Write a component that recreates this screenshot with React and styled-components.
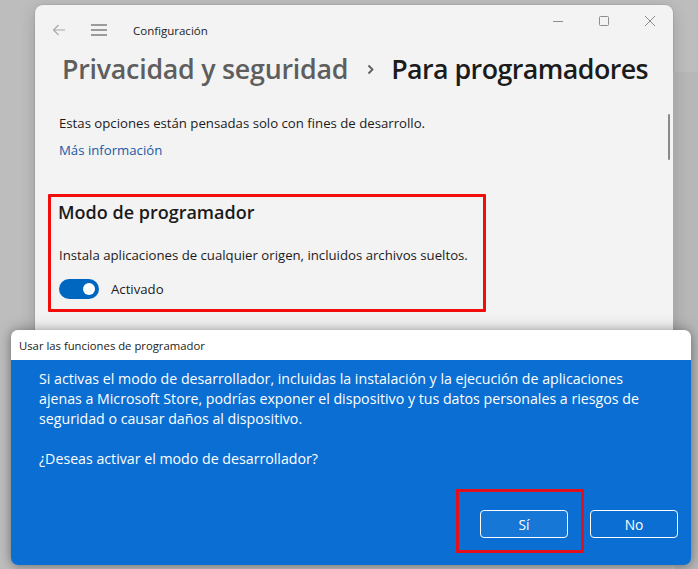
import React from "react";
import styled, { createGlobalStyle } from "styled-components";

const GlobalStyle = createGlobalStyle`
  html, body {
    margin: 0;
    padding: 0;
    background: #bcbcbc;
    font-family: "Open Sans", "Noto Sans", sans-serif;
  }
`;

const Desktop = styled.div`
  position: relative;
  width: 698px;
  height: 569px;
  overflow: hidden;
  background: #bdbdbd;
`;

const BackWindow = styled.div`
  position: absolute;
  left: 673px;
  top: 72px;
  width: 40px;
  height: 520px;
  background: #b7b7b7;
  border-left: 1px solid #c8c8c8;
`;

const Window = styled.div`
  position: absolute;
  left: 35px;
  top: 5px;
  width: 638px;
  height: 540px;
  background: #f3f3f3;
  border-radius: 8px;
  box-shadow: 0 0 0 1px rgba(0, 0, 0, 0.06), 0 4px 16px rgba(0, 0, 0, 0.18);
  display: flex;
  flex-direction: column;
`;

const TitleBar = styled.div`
  display: flex;
  align-items: flex-start;
  height: 40px;
`;

const TitleLeft = styled.div`
  display: flex;
  align-items: center;
  flex: 1;
  padding: 16px 0 0 16px;
  height: 18px;
`;

const NavIcon = styled.span`
  display: inline-flex;
  width: 16px;
  justify-content: center;
  margin-right: ${(p) => p.$gap}px;
  color: ${(p) => p.$color};
`;

const AppName = styled.span`
  font-size: 11.5px;
  color: #1b1b1b;
`;

const Controls = styled.div`
  display: flex;
`;

const ControlButton = styled.span`
  width: 46px;
  height: 32px;
  display: flex;
  align-items: center;
  justify-content: center;
  color: #8c8c8c;
`;

const Breadcrumb = styled.h1`
  margin: 6px 0 0 27px;
  display: flex;
  align-items: baseline;
  font-size: 26.8px;
  font-weight: 600;
  line-height: 36px;
`;

const Crumb = styled.span`
  color: ${(p) => (p.$current ? "#1b1b1b" : "#5e5e5e")};
  letter-spacing: ${(p) => (p.$current ? "-0.55px" : "-0.25px")};
`;

const Chevron = styled.span`
  display: inline-flex;
  margin: 0 17px 0 19px;
  color: #5e5e5e;
  align-self: center;
`;

const Body = styled.div`
  position: relative;
  padding: 26px 0 0 24px;
`;

const Scrollbar = styled.div`
  position: absolute;
  right: 3px;
  top: 27px;
  width: 2px;
  height: 46px;
  border-radius: 1px;
  background: #8a8a8a;
`;

const Text = styled.p`
  margin: 0;
  font-size: 13.2px;
  line-height: 20px;
  color: #1b1b1b;
`;

const Link = styled.a`
  display: block;
  margin-top: 7px;
  font-size: 13.2px;
  line-height: 20px;
  color: #1a5aa6;
  text-decoration: none;
`;

const Highlight = styled.section`
  margin: 34px 0 0 -11px;
  width: 438px;
  height: 118px;
  border: 3px solid #f20d0d;
  border-radius: 1px;
  padding: 2px 0 0 7px;
  box-sizing: border-box;
`;

const SectionTitle = styled.h2`
  margin: 0;
  font-size: 18px;
  font-weight: 600;
  line-height: 26px;
  color: #1b1b1b;
`;

const SectionText = styled(Text)`
  margin: 20px 0 0 1px;
  font-size: 13.2px;
`;

const ToggleRow = styled.div`
  display: flex;
  align-items: center;
  margin: 14px 0 0 1px;
  gap: 12px;
`;

const Toggle = styled.span`
  width: 40px;
  height: 20px;
  border-radius: 10px;
  background: #0067c0;
  display: flex;
  align-items: center;
  justify-content: flex-end;
  padding-right: 4px;
  box-sizing: border-box;
`;

const Knob = styled.span`
  width: 12px;
  height: 12px;
  border-radius: 50%;
  background: #fff;
`;

const ToggleLabel = styled.span`
  font-size: 13.2px;
  color: #1b1b1b;
`;

const Dialog = styled.div`
  position: absolute;
  left: 11px;
  top: 330px;
  width: 680px;
  height: 235px;
  border-radius: 7px;
  overflow: hidden;
  box-shadow: 0 -2px 14px rgba(0, 0, 0, 0.22), 0 2px 8px rgba(0, 0, 0, 0.25);
  display: flex;
  flex-direction: column;
`;

const DialogTitle = styled.div`
  height: 30px;
  background: #fff;
  display: flex;
  align-items: center;
  padding-left: 8px;
  font-size: 11.3px;
  color: #1b1b1b;
`;

const DialogBody = styled.div`
  flex: 1;
  background: #0a6ed3;
  display: flex;
  flex-direction: column;
  padding: 9px 13px 27px 28px;
`;

const Message = styled.p`
  margin: 0 0 20px;
  font-size: 14.2px;
  line-height: 20px;
  color: #fff;
  white-space: nowrap;
`;

const Actions = styled.div`
  margin-top: auto;
  display: flex;
  justify-content: flex-end;
  gap: 22px;
`;

const Marked = styled.span`
  position: relative;
  display: inline-flex;
`;

const MarkFrame = styled.span`
  position: absolute;
  left: -24px;
  top: -21px;
  right: -16px;
  bottom: -15px;
  border: 3px solid #e0101c;
  pointer-events: none;
`;

const Button = styled.button`
  width: 88px;
  height: 28px;
  border: 1.5px solid #fff;
  border-radius: 4px;
  background: ${(p) => (p.$primary ? "#1777d6" : "#0a6ed3")};
  color: #fff;
  font-family: inherit;
  font-size: 13.8px;
  padding: 0;
`;

const BackArrow = () => (
  <svg width="14" height="12" viewBox="0 0 14 12" fill="none" stroke="currentColor" strokeWidth="1.1">
    <path d="M13 6H1.5M6.5 1L1.5 6l5 5" />
  </svg>
);

const Hamburger = () => (
  <svg width="16" height="12" viewBox="0 0 16 12" fill="none" stroke="currentColor" strokeWidth="1.2">
    <path d="M0 1h16M0 6h16M0 11h16" />
  </svg>
);

const Minimize = () => (
  <svg width="10" height="10" viewBox="0 0 10 10" stroke="currentColor" strokeWidth="1">
    <path d="M0 5.5h10" />
  </svg>
);

const Maximize = () => (
  <svg width="10" height="10" viewBox="0 0 10 10" fill="none" stroke="currentColor" strokeWidth="1">
    <rect x="0.5" y="0.5" width="9" height="9" rx="1" />
  </svg>
);

const Close = () => (
  <svg width="10" height="10" viewBox="0 0 10 10" stroke="currentColor" strokeWidth="1">
    <path d="M0 0l10 10M10 0L0 10" />
  </svg>
);

const ChevronIcon = () => (
  <svg width="7" height="11" viewBox="0 0 7 11" fill="none" stroke="currentColor" strokeWidth="1.8">
    <path d="M1.5 1.5l4 4-4 4" />
  </svg>
);

export default function App() {
  return (
    <>
      <GlobalStyle />
      <Desktop>
        <BackWindow />
        <Window>
          <TitleBar>
            <TitleLeft>
              <NavIcon $gap={24} $color="#a8a8a8">
                <BackArrow />
              </NavIcon>
              <NavIcon $gap={26} $color="#454545">
                <Hamburger />
              </NavIcon>
              <AppName>Configuración</AppName>
            </TitleLeft>
            <Controls>
              <ControlButton>
                <Minimize />
              </ControlButton>
              <ControlButton>
                <Maximize />
              </ControlButton>
              <ControlButton>
                <Close />
              </ControlButton>
            </Controls>
          </TitleBar>
          <Breadcrumb>
            <Crumb>Privacidad y seguridad</Crumb>
            <Chevron>
              <ChevronIcon />
            </Chevron>
            <Crumb $current>Para programadores</Crumb>
          </Breadcrumb>
          <Body>
            <Scrollbar />
            <Text>Estas opciones están pensadas solo con fines de desarrollo.</Text>
            <Link>Más información</Link>
            <Highlight>
              <SectionTitle>Modo de programador</SectionTitle>
              <SectionText>
                Instala aplicaciones de cualquier origen, incluidos archivos sueltos.
              </SectionText>
              <ToggleRow>
                <Toggle>
                  <Knob />
                </Toggle>
                <ToggleLabel>Activado</ToggleLabel>
              </ToggleRow>
            </Highlight>
          </Body>
        </Window>
        <Dialog>
          <DialogTitle>Usar las funciones de programador</DialogTitle>
          <DialogBody>
            <Message>
              Si activas el modo de desarrollador, incluidas la instalación y la ejecución de aplicaciones
              <br />
              ajenas a Microsoft Store, podrías exponer el dispositivo y tus datos personales a riesgos de
              <br />
              seguridad o causar daños al dispositivo.
            </Message>
            <Message>¿Deseas activar el modo de desarrollador?</Message>
            <Actions>
              <Marked>
                <Button $primary>Sí</Button>
                <MarkFrame />
              </Marked>
              <Button>No</Button>
            </Actions>
          </DialogBody>
        </Dialog>
      </Desktop>
    </>
  );
}
